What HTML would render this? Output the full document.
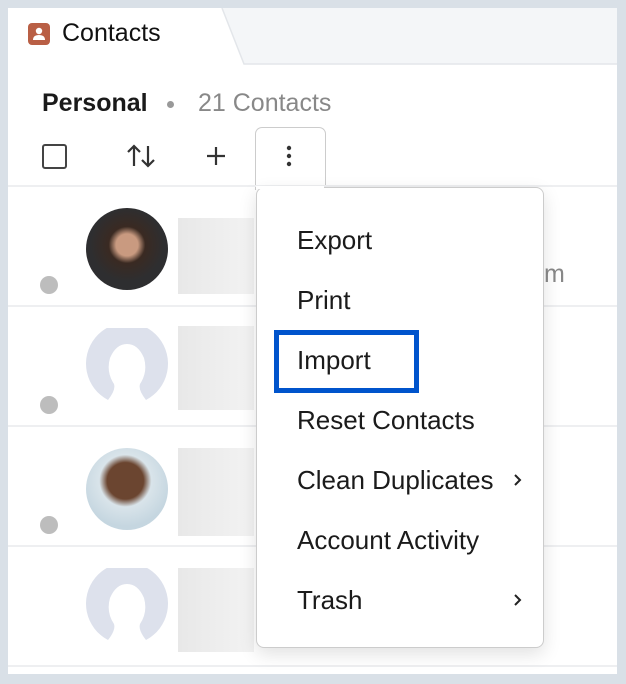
<!DOCTYPE html>
<html><head><style>
body{margin:0;width:626px;height:684px;background:#d9e0e7;font-family:"Liberation Sans",sans-serif;position:relative;overflow:hidden}
.a{position:absolute}
.panel{left:8px;top:8px;width:609px;height:666px;background:#fff}
.row{left:8px;width:609px;height:2px;background:#eeeff1}
.av{width:82px;height:82px;border-radius:50%;left:86px}
.dot{width:18px;height:18px;border-radius:50%;background:#bdbdbd;left:40px}
.blur{left:178px;width:76px;height:76px;background:linear-gradient(90deg,#e8e8e8,#f3f3f3)}
.mi{left:297px;font-size:26px;color:#1b1b1b}
</style></head><body>
<div class="a panel"></div>
<svg class="a" style="left:8px;top:8px" width="609" height="60"><path d="M214 0 L236 56 L609 56 L609 0Z" fill="#f4f6f8"/><path d="M214 0 L236 56 L609 56" fill="none" stroke="#e3e6ea" stroke-width="1.5"/></svg>
<div class="a" style="left:28px;top:23px;width:22px;height:22px;border-radius:4px;background:#b95f45"></div>
<svg class="a" style="left:28px;top:23px" width="22" height="22"><circle cx="11" cy="8" r="3.2" fill="#fff"/><path d="M5 17 Q5 12 11 12 Q17 12 17 17Z" fill="#fff"/></svg>
<div class="a" style="left:62px;top:19px;font-size:25px;color:#111">Contacts</div>
<div class="a" style="left:42px;top:89px;font-size:25px;font-weight:bold;color:#1a1a1a">Personal</div>
<div class="a" style="left:167px;top:101px;width:7px;height:7px;border-radius:50%;background:#999"></div>
<div class="a" style="left:198px;top:89px;font-size:25px;color:#888">21 Contacts</div>
<div class="a" style="left:42px;top:144px;width:21px;height:21px;border:2px solid #444;border-radius:3px"></div>
<svg class="a" style="left:126px;top:142px" width="32" height="28"><path d="M8 4V24M2 10L8 4L14 10M22 4V24M16 18L22 24L28 18" fill="none" stroke="#333" stroke-width="2.2"/></svg>
<svg class="a" style="left:206px;top:146px" width="20" height="20"><path d="M10 1V19M1 10H19" stroke="#333" stroke-width="2.2"/></svg>
<div class="a" style="left:255px;top:127px;width:69px;height:62px;border:1.5px solid #ccc;border-bottom:none;border-radius:7px 7px 0 0;background:#fff"></div>
<svg class="a" style="left:285px;top:144px" width="8" height="24"><circle cx="4" cy="4" r="2.2" fill="#333"/><circle cx="4" cy="12" r="2.2" fill="#333"/><circle cx="4" cy="20" r="2.2" fill="#333"/></svg>
<div class="a row" style="top:185px"></div><div class="a row" style="top:305px"></div><div class="a row" style="top:425px"></div><div class="a row" style="top:545px"></div><div class="a row" style="top:665px"></div>
<div class="a av" style="top:208px;background:radial-gradient(circle at 50% 45%,#c99a80 0 18%,#3a2a22 30%,#2e2e30 60%)"></div>
<div class="a av" style="top:448px;background:radial-gradient(circle at 48% 40%,#6b4530 0 28%,#d9e4ea 40%,#c5d6e0 70%)"></div>
<svg class="a" style="left:86px;top:328px" width="82" height="82"><path d="M22 72 A41 41 0 1 1 60 72 Q52 62 54 56 Q62 44 58 30 Q52 16 41 16 Q30 16 24 30 Q20 44 28 56 Q30 62 22 72Z" fill="#dde1ec"/></svg>
<svg class="a" style="left:86px;top:568px" width="82" height="82"><path d="M22 72 A41 41 0 1 1 60 72 Q52 62 54 56 Q62 44 58 30 Q52 16 41 16 Q30 16 24 30 Q20 44 28 56 Q30 62 22 72Z" fill="#dde1ec"/></svg>
<div class="a dot" style="top:276px"></div><div class="a dot" style="top:396px"></div><div class="a dot" style="top:516px"></div>
<div class="a blur" style="top:218px"></div><div class="a blur" style="top:326px;height:84px"></div><div class="a blur" style="top:448px;height:88px"></div><div class="a blur" style="top:568px;height:84px"></div>
<div class="a" style="left:544px;top:260px;font-size:25px;color:#888">m</div>
<div class="a" style="left:256px;top:187px;width:286px;height:459px;border:1.5px solid #ccc;border-radius:8px;background:#fff;box-shadow:0 6px 18px rgba(0,0,0,.12)"></div>
<div class="a" style="left:256px;top:186px;width:68px;height:3px;background:#fff"></div>
<div class="a mi" style="top:225px">Export</div>
<div class="a mi" style="top:285px">Print</div>
<div class="a" style="left:274px;top:330px;width:135px;height:53px;border:5px solid #0054cc"></div>
<div class="a mi" style="top:345px">Import</div>
<div class="a mi" style="top:405px">Reset Contacts</div>
<div class="a mi" style="top:465px">Clean Duplicates</div>
<div class="a mi" style="top:525px">Account Activity</div>
<div class="a mi" style="top:585px">Trash</div>
<svg class="a" style="left:512px;top:472px" width="12" height="16"><path d="M3 3L8 8L3 13" fill="none" stroke="#222" stroke-width="2"/></svg>
<svg class="a" style="left:512px;top:592px" width="12" height="16"><path d="M3 3L8 8L3 13" fill="none" stroke="#222" stroke-width="2"/></svg>
</body></html>
